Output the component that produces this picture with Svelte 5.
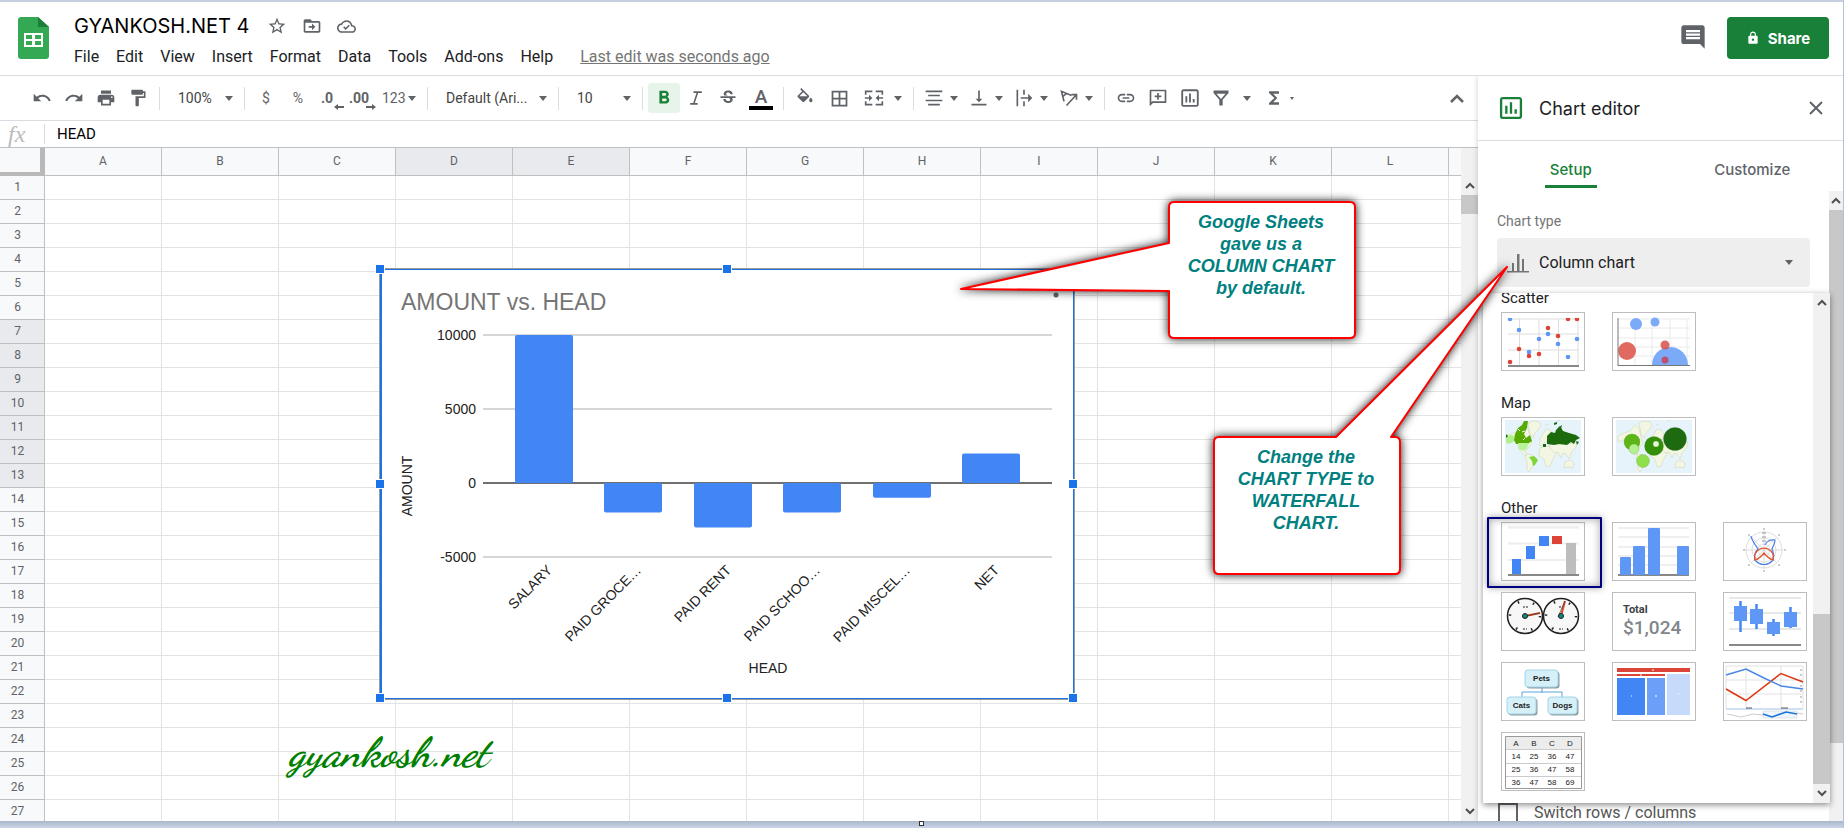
<script>
  const menus = ['File', 'Edit', 'View', 'Insert', 'Format', 'Data', 'Tools', 'Add-ons', 'Help'];

  const columns = ['A', 'B', 'C', 'D', 'E', 'F', 'G', 'H', 'I', 'J', 'K', 'L'];
  const rows = Array.from({ length: 27 }, (_, i) => i + 1);
  const selectedColumns = ['D', 'E'];

  // Toolbar glyphs on a 24x24 grid
  const icons = {
    undo: 'M12.5 8c-2.65 0-5.05.99-6.9 2.6L2 7v9h9l-3.62-3.62c1.39-1.16 3.16-1.88 5.12-1.88 3.54 0 6.55 2.31 7.6 5.5l2.37-.78C21.08 11.03 17.15 8 12.5 8z',
    redo: 'M18.4 10.6C16.55 8.99 14.15 8 11.5 8c-4.65 0-8.58 3.03-9.96 7.22L3.9 16c1.05-3.19 4.05-5.5 7.6-5.5 1.95 0 3.73.72 5.12 1.88L13 16h9V7l-3.6 3.6z',
    print: 'M19 8H5c-1.66 0-3 1.34-3 3v6h4v4h12v-4h4v-6c0-1.66-1.34-3-3-3zm-3 11H8v-5h8v5zm3-7c-.55 0-1-.45-1-1s.45-1 1-1 1 .45 1 1-.45 1-1 1zm-1-9H6v4h12V3z',
    paint: 'M18 4V3c0-.55-.45-1-1-1H5c-.55 0-1 .45-1 1v4c0 .55.45 1 1 1h12c.55 0 1-.45 1-1V6h1v4H9v11c0 .55.45 1 1 1h2c.55 0 1-.45 1-1v-9h8V4h-3z',
    bold: 'M15.6 10.79c.97-.67 1.65-1.77 1.65-2.79 0-2.26-1.75-4-4-4H7v14h7.04c2.09 0 3.71-1.7 3.71-3.79 0-1.52-.86-2.82-2.15-3.42zM10 6.5h3c.83 0 1.5.67 1.5 1.5s-.67 1.5-1.5 1.5h-3v-3zm3.5 9H10v-3h3.5c.83 0 1.5.67 1.5 1.5s-.67 1.5-1.5 1.5z',
    italic: 'M9 4v2h3.6l-4 12H5v2h9v-2h-3.4l4-12H19V4z',
    strike: 'M7.24 8.75c-.26-.48-.39-1.03-.39-1.67 0-.61.13-1.16.4-1.67.26-.5.63-.93 1.11-1.29.48-.35 1.05-.63 1.7-.83.66-.19 1.39-.29 2.18-.29.81 0 1.54.11 2.21.34.66.22 1.23.54 1.69.94.47.4.83.88 1.08 1.43.25.55.38 1.15.38 1.81h-3.01c0-.31-.05-.59-.15-.85-.09-.27-.24-.49-.44-.68-.2-.19-.45-.33-.75-.44-.3-.1-.66-.16-1.06-.16-.39 0-.74.04-1.03.13-.29.09-.53.21-.72.36-.19.16-.34.34-.44.55-.1.21-.15.43-.15.66 0 .48.25.88.74 1.21.38.25.77.48 1.41.7H7.39c-.05-.08-.11-.17-.15-.25zM21 12v-2H3v2h9.62c.18.07.4.14.55.2.37.17.66.34.87.51.21.17.35.36.43.57.07.2.11.43.11.69 0 .23-.05.45-.14.66-.09.2-.23.38-.42.53-.19.15-.42.26-.71.35-.29.08-.63.13-1.01.13-.43 0-.83-.04-1.18-.13s-.66-.23-.91-.42c-.25-.19-.45-.44-.59-.75-.14-.31-.25-.76-.25-1.21H6.4c0 .55.08 1.13.24 1.58.16.45.37.85.65 1.21.28.35.6.66.98.92.37.26.78.48 1.22.65.44.17.9.3 1.38.39.48.08.96.13 1.44.13.8 0 1.53-.09 2.18-.28s1.21-.45 1.67-.79c.46-.34.82-.77 1.07-1.27s.38-1.07.38-1.71c0-.6-.1-1.14-.31-1.61-.05-.11-.11-.23-.17-.33H21z',
    fill: 'M16.56 8.94L7.62 0 6.21 1.41l2.38 2.38-5.15 5.15c-.59.59-.59 1.54 0 2.12l5.5 5.5c.29.29.68.44 1.06.44s.77-.15 1.06-.44l5.5-5.5c.59-.58.59-1.53 0-2.12zM5.2 10L10 5.2l4.8 4.8zM19 11.5s-2 2.17-2 3.5c0 1.1.9 2 2 2s2-.9 2-2c0-1.33-2-3.5-2-3.5z',
    borders: 'M3 3v18h18V3H3zm8 16H5v-6h6v6zm0-8H5V5h6v6zm8 8h-6v-6h6v6zm0-8h-6V5h6v6z',
    merge: 'M1 3h9v2H3v3H1zM14 3h9v5h-2V5h-7zM1 16h2v3h7v2H1zM21 16h2v5h-9v-2h7zM1 11h5V8l4 4-4 4v-3H1zM23 11h-5V8l-4 4 4 4v-3h5z',
    align: 'M2 3h20v2H2zM5 8h14v2H5zM2 14h20v2H2zM5 19h14v2H5z',
    bottom: 'M16 13h-3V3h-2v10H8l4 4 4-4zM3 19v2h18v-2H3z',
    wrap: 'M3 2h2v20H3zM11 2h2v6h-2zM11 16h2v6h-2zM8 11h9V7l5 5-5 5v-4H8z',
    link: 'M3.9 12c0-1.71 1.39-3.1 3.1-3.1h4V7H7c-2.76 0-5 2.24-5 5s2.24 5 5 5h4v-1.9H7c-1.71 0-3.1-1.39-3.1-3.1zM8 13h8v-2H8v2zm9-6h-4v1.9h4c1.71 0 3.1 1.39 3.1 3.1s-1.39 3.1-3.1 3.1h-4V17h4c2.76 0 5-2.24 5-5s-2.24-5-5-5z',
    comment: 'M3 2h18c.6 0 1 .4 1 1v14c0 .6-.4 1-1 1H6l-4 4V3c0-.6.4-1 1-1zm1 2v13l1-1h15V4zM11 6h2v3h3v2h-3v3h-2v-3H8V9h3z',
    chart: 'M9 17H7v-7h2v7zm4 0h-2V7h2v10zm4 0h-2v-4h2v4zm2.5 2.5h-15v-15h15v15zM19 2.500H5c-1.400 0-2.500 1.100-2.500 2.500v14c0 1.400 1.100 2.500 2.500 2.500h14c1.400 0 2.500-1.100 2.500-2.500V5c0-1.400-1.100-2.500-2.500-2.500z',
    filter: 'M3 3h18v3l-7 8v7h-4v-7L3 6zM6.500 7l5.500 6.300L17.500 7z',
    sum: 'M18 4H6v2l6.500 6L6 18v2h12v-3h-7l5-5-5-5h7z',
    star: 'M22 9.24l-7.19-.62L12 2 9.19 8.63 2 9.24l5.46 4.73L5.82 21 12 17.27 18.18 21l-1.63-7.03L22 9.24zM12 15.4l-3.76 2.27 1-4.28-3.32-2.88 4.38-.38L12 6.1l1.71 4.04 4.38.38-3.32 2.88 1 4.28L12 15.4z',
    move: 'M20 6h-8l-2-2H4c-1.1 0-2 .9-2 2v12c0 1.1.9 2 2 2h16c1.1 0 2-.9 2-2V8c0-1.1-.9-2-2-2zm0 12H4V8h16v10zM12 17l4-4-4-4v3H8v2h4z',
    cloud: 'M19.35 10.04C18.67 6.59 15.64 4 12 4 9.11 4 6.61 5.64 5.36 8.04 2.34 8.36 0 10.91 0 14c0 3.31 2.69 6 6 6h13c2.76 0 5-2.24 5-5 0-2.64-2.05-4.78-4.65-4.96zM19 18H6c-2.21 0-4-1.79-4-4 0-2.05 1.53-3.76 3.56-3.97l1.07-.11.5-.95C8.08 7.14 9.94 6 12 6c2.62 0 4.88 1.86 5.39 4.43l.3 1.5 1.53.11c1.56.1 2.78 1.41 2.78 2.96 0 1.65-1.35 3-3 3zM11 13.600l-1.800-1.800-1.400 1.400L11 16.400l5.200-5.200-1.400-1.400z',
    notes: 'M21.99 4c0-1.1-.89-2-1.99-2H4c-1.1 0-2 .9-2 2v12c0 1.1.9 2 2 2h14l4 4-.01-18zM18 14H6v-2h12v2zm0-3H6V9h12v2zm0-3H6V6h12v2z',
    lock: 'M18 8h-1V6c0-2.76-2.24-5-5-5S7 3.24 7 6v2H6c-1.1 0-2 .9-2 2v10c0 1.1.9 2 2 2h12c1.1 0 2-.9 2-2V10c0-1.1-.9-2-2-2zm-6 9c-1.1 0-2-.9-2-2s.9-2 2-2 2 .9 2 2-.9 2-2 2zm3.1-9H8.9V6c0-1.71 1.39-3.1 3.1-3.1 1.71 0 3.1 1.39 3.1 3.1v2z'
  };

  // Chart data, drawn in the coordinates of the chart svg
  const data = [
    { head: 'SALARY', amount: 10000 },
    { head: 'PAID GROCE…', amount: -2000 },
    { head: 'PAID RENT', amount: -3000 },
    { head: 'PAID SCHOO…', amount: -2000 },
    { head: 'PAID MISCEL…', amount: -1000 },
    { head: 'NET', amount: 2000 }
  ];
  const ticks = [10000, 5000, 0, -5000];
  const yOf = (v) => 214 - (v * 74) / 5000;
  const bars = data.map((d, i) => {
    const x = Math.round(135 + i * 89.4);
    return {
      ...d,
      x,
      y: Math.min(yOf(d.amount), yOf(0)),
      h: Math.abs(yOf(d.amount) - yOf(0))
    };
  });

  const blueDots = [[8, 6], [17, 17], [27, 39], [37, 26], [46, 21], [56, 31], [66, 44], [75, 26]];
  const redDots = [[8, 49], [17, 36], [27, 43], [37, 41], [46, 15], [56, 23], [66, 6], [75, 6]];
  const gauges = [{ x: 23, nx: 38, ny: 20 }, { x: 59, nx: 63, ny: 8 }];
  const candles = [[10, 13, 15, 8, 39], [26, 16, 15, 11, 36], [43, 29, 12, 26, 43], [60, 19, 15, 14, 35]];
  const orgNodes = [['Pets', 23, 7, 33], ['Cats', 5, 34, 29], ['Dogs', 46, 34, 29]];
  const tableRows = [['A', 'B', 'C', 'D'], [14, 25, 36, 47], [25, 36, 47, 58], [36, 47, 58, 69]];

  const sections = [
    { title: 'Scatter', kinds: ['scatter', 'bubble'] },
    { title: 'Map', kinds: ['geo', 'geomarker'] },
    {
      title: 'Other',
      kinds: ['waterfall', 'histogram', 'radar', 'gauge', 'scorecard', 'candlestick', 'org', 'treemap', 'timeline', 'table']
    }
  ];

  let title = $state('GYANKOSH.NET 4');
  let formula = $state('HEAD');
  let activeTab = $state('Setup');
  let chartType = $state('Column chart');
  let switched = $state(false);
</script>

{#snippet icon(name, size = 20)}
  <svg width={size} height={size} viewBox="0 0 24 24" fill="currentColor" fill-rule="evenodd" aria-hidden="true">
    <path d={icons[name]} />
  </svg>
{/snippet}

{#snippet tool(name, label)}
  <button class="tool" aria-label={label}>{@render icon(name)}</button>
{/snippet}

{#snippet split(name, label)}
  <button class="split" aria-label={label}>{@render icon(name)}<i class="caret"></i></button>
{/snippet}

{#snippet chevron(up)}
  <svg class="chev" width="10" height="7" viewBox="0 0 10 7" aria-hidden="true">
    <path d={up ? 'M1 6l4-4 4 4' : 'M1 1l4 4 4-4'} fill="none" stroke="#505050" stroke-width="2" />
  </svg>
{/snippet}

{#snippet landmass()}
  <rect x="3" y="2" width="76" height="53" fill="#e6f3fb" />
  <g fill="#f3f6e2" stroke="#cfd3ae" stroke-width=".5">
    <path d="M26 5l5-2 6 1 2 3-2 4-4 4-2 5-3-4-1-6z" />
    <path d="M5 18l6-3 6-2 5-6 4 3 2 9 2 6-4 5-3 4 3 4-4-1-5-6-2-7-4-2-6 2z" />
    <path d="M25 36l5 1 5 4-1 4-4 4-3 5-2-3v-7l-2-4z" />
    <path d="M38 20l3-4 3-5 4 1 3 4-2 6-6 2-3 4-3-1 1-4z" />
    <path d="M38 30l6-2 6 1 4 7-3 5-3 7-4 1-2-8-5-3z" />
    <path d="M48 24l7 2h13l7-2-1 5-5 6-2 6-3-5-3-1-2 5-3-6-4 1-4-5z" />
    <path d="M63 44l5-2 4 3-1 5-5-1-4 1z" />
    <path d="M43 7l3-1M54 3l4-1" />
  </g>
{/snippet}

{#snippet thumb(kind)}
  <svg width="82" height="57" viewBox="0 0 82 57" aria-hidden="true">
    {#if kind === 'scatter'}
      <path d="M6 6h71M6 21h71M6 37h71" stroke="#eee" stroke-width="2" />
      <path d="M17.500 6v46M37 6v46M56.500 6v46M76 6v46" stroke="#ddd" />
      <path d="M6 53h71" stroke="#888" stroke-width="2" />
      {#each blueDots as [x, y]}<circle cx={x} cy={y} r="2.300" fill="#5e97f6" />{/each}
      {#each redDots as [x, y]}<circle cx={x} cy={y} r="2.300" fill="#db4437" />{/each}
      <path d="M5 0h73v5H5z" fill="#fff" />
    {:else if kind === 'bubble'}
      <path d="M5 6h72M5 15h72M5 25h72M5 34h72M5 43h72M22 6v46M39 6v46M57 6v46M74 6v46" stroke="#eaeaea" />
      <circle cx="23" cy="11" r="6" fill="#7baaf7" />
      <circle cx="42" cy="9" r="4.500" fill="#7baaf7" />
      <circle cx="14" cy="38" r="9" fill="#e06a60" />
      <path d="M39 52a18 18 0 1 1 36 0z" fill="#7baaf7" />
      <circle cx="52" cy="32" r="4.500" fill="#d94f4a" opacity=".85" />
      <circle cx="52" cy="47" r="3.500" fill="#c9405a" opacity=".85" />
      <path d="M5 5v48M5 52.500h72" stroke="#777" />
    {:else if kind === 'geo'}
      {@render landmass()}
      <path d="M5 18l4-1 3 1v5l-3 2-4 1-1-4z" fill="#aef08a" />
      <path d="M4 16l2 2-2 2z" fill="#1d6a0c" />
      <path d="M13 16l3-6 4-3 2-4h4l-1 7-3 6 2 4 4-3 2 6-3 2-3 1H14l-2-4z" fill="#57ab00" />
      <path d="M16 11l2 2M20 14l3-1M23 20l-2 2" stroke="#e6f3fb" />
      <path d="M16 25h11l-2 5-3 3-5-2z" fill="#b8f397" />
      <path d="M27 39l5-1 4 4-3 5-2 1-1-5z" fill="#7fd43a" />
      <path d="M45 18l4-4 4 1 1-3 4-4 3 5 6 2 7 2 4 3-4 2-2 4-3-2-4 3-8-1-5 1-7-1z" fill="#1d6a0c" />
      <path d="M52 5l3-1v2l-3 1zM56 10l4-3-1 4zM41 26h3v3h-3zM74 23l3 1-2 3z" fill="#1d6a0c" />
    {:else if kind === 'geomarker'}
      {@render landmass()}
      <g stroke="#3d7a1a" stroke-opacity=".35" stroke-width=".600">
        <circle cx="19" cy="24" r="8" fill="#5cb615" />
        <circle cx="21" cy="31" r="5" fill="#b5f08e" />
        <circle cx="41" cy="28" r="9.500" fill="#338f07" />
        <circle cx="43" cy="26" r="3" fill="#e5f8d6" />
        <circle cx="30" cy="43" r="6.500" fill="#90e04b" />
        <circle cx="62" cy="21" r="11.500" fill="#1d6a10" />
      </g>
    {:else if kind === 'waterfall'}
      <path d="M6 4.500h71M6 20.500h71M6 37h71" stroke="#eee" stroke-width="2" />
      <path d="M10 36h9v16h-9zM24 23h9v13h-9zM37 13h10v10H37z" fill="#4285f4" />
      <path d="M50 13h10v8H50z" fill="#db4437" />
      <path d="M64 20h10v32H64z" fill="#bdbdbd" />
      <path d="M6 52h71" stroke="#888" stroke-width="2" />
    {:else if kind === 'histogram'}
      <path d="M5 5h71M5 14h71M5 24h71M5 33h71M5 42h71" stroke="#eaeaea" stroke-width="1.500" />
      <path d="M5 52h71" stroke="#888" stroke-width="2" />
      <g fill="#5e97f6">
        <rect x="7" y="34" width="11" height="18" rx="1" /><rect x="20" y="23" width="12" height="29" rx="1" />
        <rect x="35" y="5" width="12" height="47" rx="1" /><rect x="64" y="23" width="12" height="29" rx="1" />
      </g>
    {:else if kind === 'radar'}
      <g fill="none" stroke="#d4d4d4" stroke-width=".800">
        <circle cx="40" cy="27" r="6" /><circle cx="40" cy="27" r="12" /><circle cx="40" cy="27" r="18" />
        <path d="M40 8v38M21 27h38M27 14l26 26M53 14L27 40" />
      </g>
      <path d="M38 10h4M38 14h4M38 18h4M39 6h2M24 12h2M54 12h2M24 42h2M54 42h2M19 27h2M60 27h2M39 48h2" stroke="#999" />
      <path d="M27 13c1 6 5 9 7 13-4 4-4 9-3 11 5 6 13 6 18 0 1-2 1-7-1-11 1-3 3-5 3-9-5-1-9 2-10 5" fill="none" stroke="#4a80e8" stroke-width="1.200" />
      <path d="M36 26c-4 2-6 6-5 11 3-1 6-3 9-7 3 4 6 6 9 7 1-5-1-9-5-11-2-1-6-1-8 0z" fill="none" stroke="#e5532d" stroke-width="1.300" />
    {:else if kind === 'gauge'}
      {#each gauges as g}
        <circle cx={g.x} cy="23" r="17.500" fill="#f7f7f7" stroke="#222" stroke-width="1.500" />
        <circle cx={g.x} cy="23" r="15" fill="none" stroke="#222" stroke-width="2.500" stroke-dasharray="1.500 14.200" />
        <path d="M{g.x - 2} 14h5M{g.x - 2} 36h4" stroke="#222" stroke-dasharray="2 1" />
        <path d="M{g.x} 23L{g.nx} {g.ny}" stroke="#dc4b20" stroke-width="2" />
        <path d="M{g.x - 3} 24L{g.nx} {g.ny}" stroke="#333" stroke-width=".700" />
        <circle cx={g.x} cy="23" r="2.500" fill="#0f8a78" stroke="#222" />
      {/each}
    {:else if kind === 'scorecard'}
      <text x="10" y="20" class="score-label">Total</text>
      <text x="10" y="41" class="score-value">$1,024</text>
    {:else if kind === 'candlestick'}
      <path d="M5 5h72M5 20h72M5 36h72" stroke="#e8e8e8" stroke-width="2" />
      <path d="M5 52h72" stroke="#888" stroke-width="2" />
      {#each candles as [x, y, h, top, end]}
        <path d="M{x + 6.5} {top}V{end}" stroke="#4285f4" stroke-width="2.500" />
        <rect {x} {y} width="13" height={h} fill="#5e97f6" />
      {/each}
    {:else if kind === 'org'}
      <path d="M40 24v6M20 35v-6h40v6" fill="none" stroke="#5aa5da" />
      {#each orgNodes as [name, x, y, w]}
        <rect x={x + 1.5} y={y + 1.5} width={w} height="17" rx="3" fill="#8e9ba1" />
        <rect {x} {y} width={w} height="17" rx="3" fill="#d6f0f8" stroke="#a3d4e6" />
        <text x={x + w / 2} y={y + 11} class="org-label">{name}</text>
      {/each}
    {:else if kind === 'treemap'}
      <path d="M4 5h73v4H4zM4 11h48v2H4z" fill="#db4437" />
      <path d="M4 15h28v37H4z" fill="#4285f4" />
      <path d="M34 15h18v37H34z" fill="#6b9ff8" />
      <path d="M54 11h23v41H54z" fill="#c6dafc" />
      <path d="M39 7h2M27 12h2M18 33h1M42 33h2M65 31h1" stroke="#fff" />
    {:else if kind === 'timeline'}
      <path d="M2 3h77v43H2zM22 3v43M57 3v43M2 17h77M2 31h77" fill="none" stroke="#e2e2e2" />
      <path d="M76 7h2M76 12h2M76 18h2M76 23h2M76 28h2M76 34h2M76 39h2" stroke="#999" />
      <path d="M2 45h77v2H2z" fill="#cfe0f5" />
      <path d="M2 26l20 11.500L57 10.500 79 19" fill="none" stroke="#dc3912" stroke-width="1.500" />
      <path d="M2 12l20-6 18 9 17 8 22 3" fill="none" stroke="#4a86e8" stroke-width="1.500" />
      <path d="M22 45h6M57 45h7" stroke="#555" />
      <path d="M3 51l14 3 12-3 10 1M73 50l6 1" fill="none" stroke="#ccc" />
      <path d="M39 48h34v7H39z" fill="#eef5fc" stroke="#ccc" stroke-width=".500" />
      <path d="M39 51l9 3 14-5 11 2" fill="none" stroke="#1a73d8" stroke-width="1.500" />
    {:else if kind === 'table'}
      <path d="M3.500 3.500h76v52h-76z" fill="#fff" stroke="#999" />
      <path d="M4 4h75v12H4z" fill="#ececec" />
      <path d="M4 16.500h75M4 30.500h75M4 43.500h75" stroke="#ccc" />
      {#each tableRows as cells, r}
        {#each cells as cell, c}
          <text x={14 + c * 18} y={13 + r * 13} class="table-label">{cell}</text>
        {/each}
      {/each}
    {/if}
  </svg>
{/snippet}

<div class="app">
  <header>
    <svg class="logo" width="31" height="42" viewBox="0 0 31 42" aria-label="Sheets">
      <path d="M3 0h17l11 10v29c0 1.700-1.300 3-3 3H3c-1.700 0-3-1.300-3-3V3c0-1.700 1.300-3 3-3z" fill="#34a853" />
      <path d="M20 0l11 10H20z" fill="#188038" />
      <path d="M6 16h19v14H6zM8 18v4h6v-4zM17 18v4h6v-4zM8 24v4h6v-4zM17 24v4h6v-4z" fill="#fff" fill-rule="evenodd" />
    </svg>
    <div class="heading">
      <div class="title-row">
        <input class="doc-title" aria-label="Rename" bind:value={title} />
        <button class="plain" aria-label="Star">{@render icon('star', 20)}</button>
        <button class="plain" aria-label="Move">{@render icon('move', 20)}</button>
        <button class="plain" aria-label="See document status">{@render icon('cloud', 19)}</button>
      </div>
      <nav>
        {#each menus as menu}
          <button class="menu">{menu}</button>
        {/each}
        <a class="last-edit" href="#history">Last edit was seconds ago</a>
      </nav>
    </div>
    <button class="plain notes" aria-label="Open comment history">{@render icon('notes', 28)}</button>
    <button class="share">{@render icon('lock', 14)}Share</button>
  </header>

  <div class="body">
    <main>
      <div class="toolbar">
        {@render tool('undo', 'Undo')}
        {@render tool('redo', 'Redo')}
        {@render tool('print', 'Print')}
        {@render tool('paint', 'Paint format')}
        <span class="sep"></span>
        <span class="picker zoom">
          <select aria-label="Zoom"><option>100%</option></select><i class="caret"></i>
        </span>
        <span class="sep"></span>
        <button class="tool">$</button>
        <button class="tool">%</button>
        <button class="tool decimal" aria-label="Decrease decimal places">.0
          <svg width="10" height="6" viewBox="0 0 10 6"><path d="M0 3l4-3v2h6v2H4v2z" fill="#5f6368" /></svg>
        </button>
        <button class="tool decimal" aria-label="Increase decimal places">.00
          <svg width="10" height="6" viewBox="0 0 10 6"><path d="M10 3L6 0v2H0v2h6v2z" fill="#5f6368" /></svg>
        </button>
        <button class="formats">123<i class="caret"></i></button>
        <span class="sep"></span>
        <span class="picker font">
          <select aria-label="Font"><option>Default (Ari...</option></select><i class="caret"></i>
        </span>
        <span class="sep"></span>
        <span class="picker size">
          <select aria-label="Font size"><option>10</option></select><i class="caret"></i>
        </span>
        <span class="sep"></span>
        <button class="tool active" aria-label="Bold">{@render icon('bold', 22)}</button>
        {@render tool('italic', 'Italic')}
        {@render tool('strike', 'Strikethrough')}
        <button class="tool text-color" aria-label="Text color">A</button>
        <span class="sep"></span>
        {@render tool('fill', 'Fill color')}
        <button class="tool borders" aria-label="Borders">{@render icon('borders', 21)}</button>
        <button class="split merge" aria-label="Merge cells">{@render icon('merge')}<i class="caret"></i></button>
        <span class="sep"></span>
        {@render split('align', 'Horizontal align')}
        {@render split('bottom', 'Vertical align')}
        {@render split('wrap', 'Text wrapping')}
        <button class="split" aria-label="Text rotation">
          <svg width="20" height="20" viewBox="0 0 24 24" fill="none" stroke="currentColor" stroke-width="2" aria-hidden="true">
            <path d="M6 16L3 4l12 5M4.500 10l5-3.500M9 21L20 9M15 8h6v6" />
          </svg>
          <i class="caret"></i>
        </button>
        <span class="sep"></span>
        {@render tool('link', 'Insert link')}
        {@render tool('comment', 'Insert comment')}
        <button class="tool" aria-label="Insert chart">{@render icon('chart', 22)}</button>
        <button class="split filter" aria-label="Create a filter">{@render icon('filter')}<i class="caret"></i></button>
        {@render tool('sum', 'Functions')}
        <i class="caret tiny"></i>
        <button class="collapse" aria-label="Hide the menus">
          <svg width="14" height="9" viewBox="0 0 14 9"><path d="M1 8l6-6 6 6" fill="none" stroke="#5f6368" stroke-width="2.500" /></svg>
        </button>
      </div>

      <div class="formula-bar">
        <span class="fx">fx</span>
        <input aria-label="Formula" bind:value={formula} />
      </div>

      <div class="sheet">
        <div class="grid">
          <table>
            <thead>
              <tr>
                <th class="corner"></th>
                {#each columns as column}
                  <th class:selected={selectedColumns.includes(column)}>{column}</th>
                {/each}
                <th></th>
              </tr>
            </thead>
            <tbody>
              {#each rows as row}
                <tr>
                  <th class:selected={row >= 7 && row <= 13}>{row}</th>
                  {#each columns as column}<td></td>{/each}
                  <td></td>
                </tr>
              {/each}
            </tbody>
          </table>

          <div class="chart">
            <svg width="100%" height="100%" viewBox="0 0 694 430" role="img" aria-label="AMOUNT vs. HEAD">
              <text x="21" y="41" class="chart-title">AMOUNT vs. HEAD</text>
              {#each ticks as tick}
                <path d="M103 {yOf(tick)}h569" stroke={tick === 0 ? '#707070' : '#d6d6d6'} stroke-width="2" />
                <text x="96" y={yOf(tick) + 5} text-anchor="end">{tick}</text>
              {/each}
              {#each bars as bar}
                <rect x={bar.x} y={bar.y} width="58" height={bar.h} rx="2" fill="#4285f4" />
                <text text-anchor="end" transform="translate({bar.x + 38} {302}) rotate(-45)">{bar.head}</text>
              {/each}
              <text transform="translate(32 217) rotate(-90)" text-anchor="middle">AMOUNT</text>
              <text x="388" y="404" text-anchor="middle">HEAD</text>
              <circle cx="676" cy="20" r="2" fill="#666" /><circle cx="676" cy="26" r="2.500" fill="#666" />
            </svg>
            {#each ['nw', 'n', 'ne', 'w', 'e', 'sw', 's', 'se'] as side}
              <span class="handle {side}"></span>
            {/each}
          </div>
          <div class="watermark">gyankosh.net</div>
        </div>
        <div class="scrollbar sheet-scroll">
          <span class="step">{@render chevron(true)}</span>
          <span class="thumb"></span>
          <span class="step last">{@render chevron(false)}</span>
        </div>
      </div>
    </main>

    <aside>
      <div class="panel-head">
        <span class="green">{@render icon('chart', 28)}</span>
        <h2>Chart editor</h2>
        <button class="plain" aria-label="Close">
          <svg width="14" height="14" viewBox="0 0 14 14"><path d="M1 1l12 12M13 1L1 13" stroke="#5f6368" stroke-width="2" /></svg>
        </button>
      </div>
      <div class="tabs">
        {#each ['Setup', 'Customize'] as tab}
          <button class:current={activeTab === tab} onclick={() => (activeTab = tab)}><span>{tab}</span></button>
        {/each}
      </div>
      <div class="panel-body">
        <div class="settings">
          <label for="chart-type">Chart type</label>
          <div class="type-picker">
            <svg width="22" height="20" viewBox="0 0 22 20" aria-hidden="true">
              <path d="M0 18h22v1.500H0zM5 10h2v8H5zM10 1h2.500v17H10zM15 6h2v12h-2z" fill="#757575" />
            </svg>
            <select id="chart-type" bind:value={chartType}><option>Column chart</option></select>
            <i class="caret"></i>
          </div>
          <div class="gallery">
            <div class="gallery-list">
              {#each sections as section}
                <section>
                  <h3>{section.title}</h3>
                  <div class="thumbs">
                    {#each section.kinds as kind}
                      <button class:marked={kind === 'waterfall'} aria-label={kind}>{@render thumb(kind)}</button>
                    {/each}
                  </div>
                </section>
              {/each}
            </div>
            <div class="scrollbar gallery-scroll">
              <span class="step">{@render chevron(true)}</span>
              <span class="thumb"></span>
              <span class="step">{@render chevron(false)}</span>
            </div>
          </div>
          <label class="switch"><input type="checkbox" bind:checked={switched} />Switch rows / columns</label>
        </div>
        <div class="scrollbar panel-scroll">
          <span class="step">{@render chevron(true)}</span>
          <span class="thumb"></span>
        </div>
      </div>
    </aside>
  </div>

  <footer><span></span></footer>

  <!-- Tutorial notes floating over the sheet -->
  <div class="callout first">
    <svg width="396" height="138" viewBox="0 0 396 138" aria-hidden="true">
      <path d="M214 1h176q5 0 5 5v126q0 5-5 5H214q-5 0-5-5V90L1 88 209 42V6q0-5 5-5z" />
    </svg>
    <p>Google Sheets<br />gave us a<br />COLUMN CHART<br />by default.</p>
  </div>
  <div class="callout second">
    <svg width="296" height="308" viewBox="0 0 296 308" aria-hidden="true">
      <path d="M6 172h117L294 2 178 172h4q5 0 5 5v127q0 5-5 5H6q-5 0-5-5V177q0-5 5-5z" />
    </svg>
    <p>Change the<br />CHART TYPE to<br />WATERFALL<br />CHART.</p>
  </div>
</div>

<style>
  :global(body) {
    margin: 0;
  }

  .app {
    position: relative;
    display: flex;
    flex-direction: column;
    height: 100vh;
    box-sizing: border-box;
    border-top: 2px solid #c5cfe0;
    border-right: 1px solid #b4c0d6;
    overflow: hidden;
    background: #fff;
    color: #202124;
    font-family: Roboto, sans-serif;
    font-size: 14px;
  }

  button,
  input,
  select {
    font: inherit;
    color: inherit;
    border: 0;
    margin: 0;
    padding: 0;
    background: none;
    outline: none;
  }

  select {
    appearance: none;
  }

  svg {
    display: block;
    flex: none;
  }

  .plain {
    display: flex;
    color: #5f6368;
  }

  .caret {
    flex: none;
    border: 4px solid transparent;
    border-top: 5px solid #5f6368;
    border-bottom: 0;
  }

  /* Header */
  header {
    display: flex;
    flex: none;
    align-items: flex-start;
    height: 73px;
    padding: 0 14px 0 18px;
    border-bottom: 1px solid #dadce0;
  }

  .logo {
    margin-top: 15px;
  }

  .heading {
    flex: 1;
    margin-left: 17px;
    padding-top: 10px;
  }

  .title-row {
    display: flex;
    align-items: center;
    gap: 15px;
    height: 28px;
    padding-left: 8px;
  }

  .doc-title {
    width: 178px;
    font: 20px Inter, sans-serif;
    color: #000;
  }

  nav {
    display: flex;
    align-items: center;
    gap: 1px;
    height: 32px;
    font-size: 16px;
  }

  .menu {
    padding: 0 8px;
  }

  .last-edit {
    margin-left: 18px;
    color: #757575;
  }

  .notes {
    margin: 21px 20px 0 0;
  }

  .share {
    display: flex;
    align-items: center;
    justify-content: center;
    gap: 8px;
    width: 102px;
    height: 42px;
    margin-top: 15px;
    border-radius: 4px;
    background: #188038;
    color: #fff;
    font: 700 15px Inter, sans-serif;
  }

  /* Toolbar */
  .body {
    display: flex;
    flex: 1;
    min-height: 0;
  }

  main {
    display: flex;
    flex: 1;
    flex-direction: column;
    min-width: 0;
  }

  .toolbar {
    display: flex;
    flex: none;
    align-items: center;
    height: 44px;
    padding-left: 26px;
    border-bottom: 1px solid #dadce0;
    color: #5f6368;
  }

  .tool {
    display: flex;
    flex: none;
    align-items: center;
    justify-content: center;
    width: 32px;
    height: 30px;
  }

  .sep {
    flex: none;
    width: 1px;
    height: 23px;
    margin: 0 5px;
    background: #dadce0;
  }

  .picker {
    position: relative;
    display: flex;
    flex: none;
    align-items: center;
    box-sizing: border-box;
    padding: 0 6px 0 13px;
    color: #444;
  }

  .picker select {
    flex: 1;
    min-width: 0;
  }

  .zoom {
    width: 74px;
  }

  .font {
    width: 120px;
  }

  .size {
    width: 73px;
  }

  .decimal {
    position: relative;
    box-sizing: border-box;
    padding-right: 6px;
    font-weight: 700;
  }

  .decimal svg {
    position: absolute;
    right: 2px;
    bottom: 3px;
  }

  .formats {
    display: flex;
    flex: none;
    align-items: center;
    box-sizing: border-box;
    gap: 2px;
    width: 44px;
    padding-left: 4px;
  }

  .active {
    border-radius: 3px;
    background: #e6f4ea;
    color: #188038;
  }

  .text-color {
    width: 24px;
    height: 24px;
    margin: 0 5px;
    border-bottom: 4px solid #000;
    font-size: 19px;
    font-weight: 500;
  }

  .borders {
    width: 36px;
  }

  .split {
    display: flex;
    flex: none;
    align-items: center;
    box-sizing: border-box;
    gap: 6px;
    width: 45px;
    padding-left: 5px;
  }

  .merge {
    width: 51px;
    padding-left: 7px;
    gap: 10px;
  }

  .filter {
    width: 52px;
    gap: 12px;
  }

  .tiny {
    border-width: 3px 2px 0;
  }

  .collapse {
    margin-left: auto;
    padding: 0 14px;
  }

  .formula-bar {
    display: flex;
    flex: none;
    align-items: center;
    height: 26px;
    border-bottom: 1px solid #bdc1c6;
  }

  .fx {
    width: 45px;
    box-sizing: border-box;
    padding-left: 8px;
    border-right: 1px solid #dadce0;
    color: #bbb;
    font: italic 24px/20px 'Liberation Serif', serif;
  }

  .formula-bar input {
    flex: 1;
    padding-left: 12px;
    color: #000;
    font-size: 15px;
  }

  /* Sheet */
  .sheet {
    display: flex;
    flex: 1;
    min-height: 0;
  }

  .grid {
    position: relative;
    flex: 1;
    min-width: 0;
    overflow: hidden;
  }

  table {
    width: 1566px;
    border-collapse: separate;
    border-spacing: 0;
    table-layout: fixed;
  }

  th,
  td {
    box-sizing: border-box;
    width: 117px;
    height: 24px;
    padding: 0;
    border: 0 solid #e2e3e3;
    border-width: 0 1px 1px 0;
  }

  th {
    padding-bottom: 2px;
    background: #f8f9fa;
    border-color: #c0c0c0;
    color: #5f6368;
    font-size: 12px;
    font-weight: 400;
  }

  th.selected {
    background: #e8eaed;
  }

  thead th {
    height: 28px;
  }

  thead .corner {
    width: 45px;
    border-right: 5px solid #b8b8b8;
    border-bottom: 4px solid #b8b8b8;
  }

  tbody th {
    padding-right: 9px;
  }

  .scrollbar {
    display: flex;
    flex: none;
    flex-direction: column;
    width: 17px;
    background: #f1f1f1;
  }

  .step {
    display: flex;
    flex: none;
    align-items: center;
    justify-content: center;
    height: 19px;
  }

  .last {
    margin-top: auto;
  }

  .sheet-scroll {
    padding-top: 28px;
  }

  .sheet-scroll .thumb {
    height: 19px;
    background: #c8c8c8;
  }

  /* Floating chart */
  .chart {
    position: absolute;
    top: 121px;
    left: 380px;
    width: 694px;
    height: 430px;
    background: #fff;
    box-shadow: inset 2px 0 #1a73e8, inset 0 0 0 1px #1a73e8, 0 0 0 1px #9a9a9a;
  }

  .chart text {
    font: 14px 'Liberation Sans', sans-serif;
    fill: #222;
  }

  .chart .chart-title {
    font-size: 23px;
    fill: #757575;
  }

  .handle {
    position: absolute;
    top: calc(50% - 5px);
    left: calc(50% - 5px);
    width: 8px;
    height: 8px;
    border: 1px solid #fff;
    background: #1a73e8;
  }

  .nw,
  .n,
  .ne {
    top: -5px;
  }

  .sw,
  .s,
  .se {
    top: calc(100% - 6px);
  }

  .nw,
  .w,
  .sw {
    left: -5px;
  }

  .ne,
  .e,
  .se {
    left: calc(100% - 6px);
  }

  .watermark {
    position: absolute;
    top: 583px;
    left: 289px;
    color: #008000;
    font: italic 700 42px/44px 'Dancing Script', 'Liberation Serif', cursive;
  }

  /* Chart editor */
  aside {
    position: relative;
    display: flex;
    flex: none;
    flex-direction: column;
    width: 365px;
    background: #fff;
    box-shadow: 0 0 6px rgba(0, 0, 0, 0.2);
    clip-path: inset(0 0 0 -8px);
  }

  .panel-head {
    display: flex;
    flex: none;
    align-items: center;
    height: 64px;
    padding: 0 20px 0 19px;
    border-bottom: 1px solid #dadce0;
  }

  .green {
    color: #188038;
  }

  h2 {
    flex: 1;
    margin: 0 0 0 14px;
    font: 18px Inter, sans-serif;
  }

  .tabs {
    display: flex;
    flex: none;
    height: 50px;
    padding-left: 2px;
    color: #5f6368;
    font: 500 15px Inter, sans-serif;
  }

  .tabs button {
    flex: 1;
    padding-top: 7px;
  }

  .tabs span {
    padding: 0 5px 6px;
  }

  .tabs .current {
    color: #188038;
  }

  .current span {
    border-bottom: 3px solid #188038;
  }

  .panel-body {
    display: flex;
    flex: 1;
    min-height: 0;
  }

  .settings {
    position: relative;
    flex: 1;
    padding: 20px 19px 0;
  }

  .settings label {
    display: block;
    color: #757575;
    line-height: 20px;
  }

  .type-picker {
    display: flex;
    align-items: center;
    gap: 10px;
    height: 49px;
    margin-top: 7px;
    padding: 0 17px 0 10px;
    border-radius: 4px;
    background: #eee;
    font-size: 16px;
  }

  .type-picker select {
    flex: 1;
  }

  .gallery {
    position: absolute;
    top: 102px;
    left: 5px;
    z-index: 1;
    display: flex;
    width: 347px;
    height: 510px;
    background: #fff;
    box-shadow: 0 2px 6px rgba(0, 0, 0, 0.45);
  }

  .gallery-list {
    flex: 1;
    padding-left: 18px;
    overflow: hidden;
  }

  .gallery-list section:first-child {
    margin-top: -5px;
  }

  h3 {
    margin: 22px 0 4px;
    font-size: 15px;
    font-weight: 400;
    line-height: 20px;
  }

  section:first-child h3 {
    margin-top: 0;
  }

  .thumbs {
    display: grid;
    grid-template-columns: repeat(3, 84px);
    gap: 11px 27px;
  }

  .thumbs button {
    position: relative;
    height: 59px;
    border: 1px solid #bdbdbd;
    background: #fff;
  }

  .marked::after {
    content: '';
    position: absolute;
    inset: -6px -18px -8px -15px;
    border: 2px solid #000080;
    border-radius: 1px;
    box-shadow: 0 0 7px rgba(0, 0, 0, 0.35), inset 0 0 9px rgba(0, 0, 0, 0.35);
  }

  .score-label {
    fill: #3c4043;
    font: 700 11px Roboto, sans-serif;
  }

  .score-value {
    fill: #80868b;
    font: 500 19px Roboto, sans-serif;
  }

  .org-label,
  .table-label {
    fill: #222;
    font: 8px 'Liberation Sans', sans-serif;
    text-anchor: middle;
  }

  .org-label {
    font-weight: 700;
  }

  .gallery-scroll .thumb {
    height: 170px;
    margin-top: auto;
    background: #c8c8c8;
  }

  .panel-scroll {
    width: 14px;
  }

  .panel-scroll .thumb {
    height: 533px;
    background: #c8c8c8;
  }

  .settings .switch {
    position: absolute;
    top: 611px;
    left: 20px;
    display: flex;
    align-items: center;
    gap: 16px;
    color: #555;
    font-size: 16px;
    line-height: 22px;
  }

  .switch input {
    appearance: none;
    box-sizing: border-box;
    width: 20px;
    height: 20px;
    border: 2px solid #5f6368;
  }

  footer {
    position: relative;
    z-index: 1;
    display: flex;
    flex: none;
    align-items: flex-start;
    justify-content: center;
    height: 7px;
    background: linear-gradient(#a9b7cb, #cad5e6);
  }

  footer span {
    width: 3px;
    height: 3px;
    border: 1px solid #333;
    background: #fff;
  }

  /* Callouts */
  .callout {
    position: absolute;
    z-index: 2;
  }

  .callout svg {
    overflow: visible;
    filter: drop-shadow(0 0 5px rgba(0, 0, 0, 0.9));
  }

  .callout path {
    fill: #fff;
    stroke: #f00;
    stroke-width: 2;
    stroke-linejoin: round;
  }

  .callout p {
    position: absolute;
    width: 186px;
    margin: 0;
    color: #008080;
    font: italic 700 18px/22px 'Liberation Sans', sans-serif;
    text-align: center;
  }

  .first {
    top: 199px;
    left: 960px;
  }

  .first p {
    top: 10px;
    left: 208px;
  }

  .second {
    top: 263px;
    left: 1213px;
  }

  .second p {
    top: 181px;
    left: 0;
  }
</style>
